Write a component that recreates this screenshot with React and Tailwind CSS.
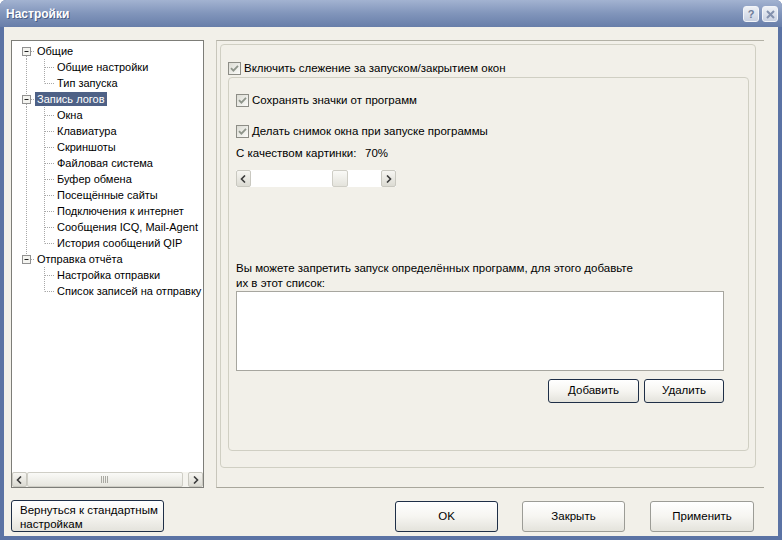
import React from "react";

const Check = () => (
  <span className="w-[13px] h-[13px] border border-[#8d8d86] bg-gradient-to-br from-[#dcdcd4] to-[#fbfbf9] flex items-center justify-center shrink-0">
    <svg width="9" height="9" viewBox="0 0 9 9">
      <path d="M1 4.2 L3.4 6.6 L8 1.8" stroke="#8e948a" strokeWidth="1.8" fill="none" />
    </svg>
  </span>
);

const Arrow = ({ dir }) => (
  <svg width="7" height="8" viewBox="0 0 7 8">
    {dir === "l" ? (
      <path d="M5 0.5 L1.5 4 L5 7.5" stroke="#3b3b3b" strokeWidth="1.6" fill="none" />
    ) : (
      <path d="M2 0.5 L5.5 4 L2 7.5" stroke="#3b3b3b" strokeWidth="1.6" fill="none" />
    )}
  </svg>
);

const ScrollBtn = ({ dir }) => (
  <div className="w-[15px] h-full shrink-0 rounded-[2px] border border-[#c9c8c0] bg-gradient-to-b from-[#f7f6f2] to-[#dcdbd3] flex items-center justify-center">
    <Arrow dir={dir} />
  </div>
);

const tree = [
  { t: "Общие", lvl: 0, first: true },
  { t: "Общие настройки", lvl: 1 },
  { t: "Тип запуска", lvl: 1, lastChild: true },
  { t: "Запись логов", lvl: 0, sel: true },
  { t: "Окна", lvl: 1 },
  { t: "Клавиатура", lvl: 1 },
  { t: "Скриншоты", lvl: 1 },
  { t: "Файловая система", lvl: 1 },
  { t: "Буфер обмена", lvl: 1 },
  { t: "Посещённые сайты", lvl: 1 },
  { t: "Подключения к интернет", lvl: 1 },
  { t: "Сообщения ICQ, Mail-Agent", lvl: 1 },
  { t: "История сообщений QIP", lvl: 1, lastChild: true },
  { t: "Отправка отчёта", lvl: 0, last: true },
  { t: "Настройка отправки", lvl: 1, parentLast: true },
  { t: "Список записей на отправку", lvl: 1, lastChild: true, parentLast: true },
];

const dot = { stroke: "#a8a8a8", strokeWidth: 1, strokeDasharray: "1 1" };

const Gutter = ({ item }) => {
  if (item.lvl === 0) {
    return (
      <svg width="23" height="16" className="shrink-0">
        {!item.first && <line x1="14.5" y1="0" x2="14.5" y2="4" {...dot} />}
        {!item.last && <line x1="14.5" y1="13" x2="14.5" y2="16" {...dot} />}
        <line x1="19" y1="8.5" x2="23" y2="8.5" {...dot} />
        <rect x="10.5" y="4.5" width="8" height="8" fill="#f4f4f0" stroke="#919191" />
        <line x1="12.5" y1="8.5" x2="16.5" y2="8.5" stroke="#222" strokeWidth="1" />
      </svg>
    );
  }
  return (
    <svg width="43" height="16" className="shrink-0">
      {!item.parentLast && <line x1="14.5" y1="0" x2="14.5" y2="16" {...dot} />}
      <line x1="32.5" y1="0" x2="32.5" y2={item.lastChild ? 8.5 : 16} {...dot} />
      <line x1="33" y1="8.5" x2="42" y2="8.5" {...dot} />
    </svg>
  );
};

const XPButton = ({ children, className = "", dark }) => (
  <button
    className={
      "rounded-[3px] border flex items-center justify-center bg-gradient-to-b from-white via-[#f6f5f1] to-[#e4e3dc] text-black whitespace-nowrap " +
      (dark ? "border-[#1f2f47] " : "border-[#9c9c96] ") +
      className
    }
  >
    {children}
  </button>
);

export default function App() {
  return (
    <div className="w-[782px] h-[540px] flex flex-col bg-[#5b73a4] font-['Liberation_Sans',Arial,sans-serif] text-[11px] text-black overflow-hidden rounded-t-[6px]">
      {/* Title bar */}
      <div className="h-[27px] shrink-0 flex items-center pl-[6px] pr-[4px] bg-gradient-to-b from-[#a3b3d1] via-[#8195bb] to-[#687ea9]">
        <span className="flex-1 text-white font-bold text-[12px] [text-shadow:1px_1px_0_#4a5d85]">Настройки</span>
        <div className="flex gap-[3px] mt-[1px]">
          <div className="w-[16px] h-[16px] rounded-[3px] border border-[#f2f4f8] bg-gradient-to-b from-[#eef1f6] to-[#c9d1e1] flex items-center justify-center text-[11px] font-bold text-[#6d7c99] leading-none">
            ?
          </div>
          <div className="w-[16px] h-[16px] rounded-[3px] border border-[#f2f4f8] bg-gradient-to-b from-[#eef1f6] to-[#c9d1e1] flex items-center justify-center">
            <svg width="9" height="9" viewBox="0 0 9 9">
              <path d="M1 1 L8 8 M8 1 L1 8" stroke="#8391ad" strokeWidth="2" />
            </svg>
          </div>
        </div>
      </div>

      {/* Body */}
      <div className="flex-1 mx-[4px] mb-[4px] bg-[#f2f0e9] flex pt-[13px] pl-[7px]">
        {/* Left column */}
        <div className="w-[193px] flex flex-col">
          <div className="h-[448px] border border-[#7d7d78] bg-white flex flex-col">
            <div className="flex-1 pt-[2px] overflow-hidden">
              {tree.map((it, i) => (
                <div key={i} className="h-[16px] flex items-center whitespace-nowrap">
                  <Gutter item={it} />
                  <span
                    className={
                      "px-[2px] h-[14px] flex items-center leading-none " +
                      (it.sel ? "bg-[#4e6186] text-white" : "")
                    }
                  >
                    {it.t}
                  </span>
                </div>
              ))}
            </div>
            <div className="h-[15px] flex bg-[#f5f4ef]">
              <ScrollBtn dir="l" />
              <div className="w-[156px] h-full rounded-[2px] border border-[#cfcec6] bg-gradient-to-b from-[#fafaf7] to-[#e7e6df] flex items-center justify-center">
                <svg width="8" height="7" viewBox="0 0 8 7">
                  <path d="M0.5 0 V7 M2.5 0 V7 M4.5 0 V7 M6.5 0 V7" stroke="#a9a9a2" strokeWidth="1" />
                </svg>
              </div>
              <div className="flex-1" />
              <ScrollBtn dir="r" />
            </div>
          </div>
          <XPButton dark className="mt-[12px] w-[153px] h-[32px] !justify-start !items-start pl-[8px] pt-[2px] text-left leading-[14px]">
            <span className="text-left text-[11.5px]">
              Вернуться к стандартным
              <br />
              настройкам
            </span>
          </XPButton>
        </div>

        {/* Right column */}
        <div className="ml-[12px] w-[548px] flex flex-col">
          <div className="h-[448px] border-t border-l border-b border-t-[#b3b1a6] border-l-[#c8c6bb] border-b-[#a9a79c] pl-[3px] pt-[3px]">
            {/* Group box */}
            <div className="w-[536px] h-[424px] border border-[#d0cfc3] rounded-[4px] px-[7px] pt-[17px]">
              <div className="flex items-center gap-[3px] h-[13px]">
                <Check />
                <span className="text-[11.5px]">Включить слежение за запуском/закрытием окон</span>
              </div>
              {/* Inner box */}
              <div className="mt-[2px] w-[521px] h-[374px] border border-[#d0cfc3] rounded-[4px] pl-[7px] pt-[16px] flex flex-col">
                <div className="flex items-center gap-[3px] h-[13px]">
                  <Check />
                  <span className="text-[11.5px]">Сохранять значки от программ</span>
                </div>
                <div className="flex items-center gap-[3px] h-[13px] mt-[18px]">
                  <Check />
                  <span className="text-[11.5px]">Делать снимок окна при запуске программы</span>
                </div>
                <div className="h-[16px] mt-[8px] flex items-center text-[11.5px]">
                  <span className="w-[129px]">С качеством картинки:</span>
                  <span>70%</span>
                </div>
                <div className="mt-[8px] w-[160px] h-[17px] flex bg-white">
                  <ScrollBtn dir="l" />
                  <div className="w-[81px]" />
                  <div className="w-[16px] h-full rounded-[2px] border border-[#cfcec6] bg-gradient-to-b from-[#fafaf7] to-[#e4e3dc]" />
                  <div className="flex-1" />
                  <ScrollBtn dir="r" />
                </div>
                <div className="mt-[74px] leading-[15px] text-[11.5px]">
                  Вы можете запретить запуск определённых программ, для этого добавьте
                  <br />
                  их в этот список:
                </div>
                <div className="w-[488px] h-[80px] bg-white border border-[#a7a69f]" />
                <div className="w-[488px] flex justify-end gap-[5px] mt-[8px]">
                  <XPButton dark className="w-[91px] h-[24px] text-[11.5px]">Добавить</XPButton>
                  <XPButton dark className="w-[80px] h-[24px] text-[11.5px]">Удалить</XPButton>
                </div>
              </div>
            </div>
          </div>
          <div className="flex justify-end pr-[10px] mt-[13px]">
            <XPButton dark className="w-[103px] h-[31px] text-[11.5px]">OK</XPButton>
            <XPButton className="w-[103px] h-[31px] ml-[24px] text-[11.5px]">Закрыть</XPButton>
            <XPButton className="w-[104px] h-[31px] ml-[25px] text-[11.5px]">Применить</XPButton>
          </div>
        </div>
      </div>
    </div>
  );
}
